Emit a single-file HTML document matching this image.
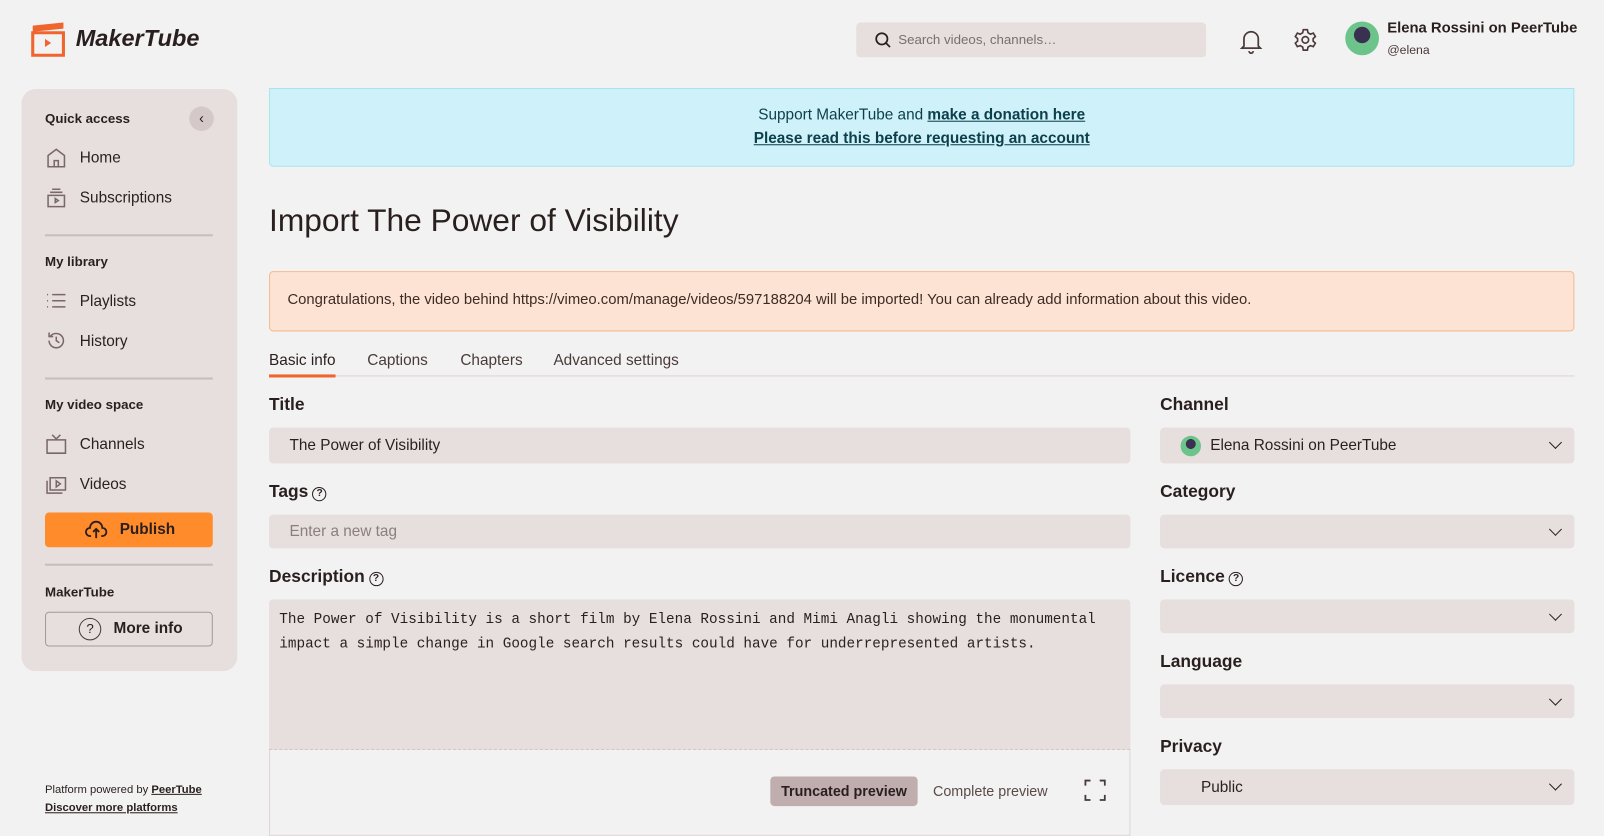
<!DOCTYPE html><html><head><style>
*{box-sizing:border-box;margin:0;padding:0}
html,body{width:1604px;height:817px;overflow:hidden;background:#f3f2f2}
#w{position:absolute;left:0;top:0;width:1568px;height:799px;transform:scale(1.023);transform-origin:0 0;font-family:"Liberation Sans",sans-serif;color:#2a1f1f;font-size:15px}
.a{position:absolute}
.side{left:21px;top:87px;width:211px;height:569px;background:#e7dede;border-radius:14px}
.sh{font-size:13px;font-weight:bold;left:44px}
.si{left:44px;font-size:15px;display:flex;align-items:center;gap:12px}
.si svg{width:22px;height:22px;fill:none;stroke:#7a6868;stroke-width:1.5}
.hr{left:44px;width:164px;height:2px;background:#c9bcbc}
.inp{background:#e7dede;border-radius:4px;height:35px;padding:0 20px;display:flex;align-items:center}
.lab{font-size:17px;font-weight:bold}
.q{display:inline-block;width:14px;height:14px;border:1.5px solid #2a1f1f;border-radius:50%;font-size:10px;text-align:center;line-height:11px;vertical-align:1px;margin-left:4px}
.chev{position:absolute;right:14px;top:10px;width:9px;height:9px;border-right:1.7px solid #2a1f1f;border-bottom:1.7px solid #2a1f1f;transform:rotate(45deg)}
</style></head><body><div id="w">
<svg class="a" style="left:30px;top:22px" width="34" height="34" viewBox="0 0 34 34"><path d="M2 10h30v22H2z" fill="none" stroke="#f0642d" stroke-width="3"/><path d="M2 3l30-3v6L2 9z" fill="#f0642d"/><path d="M14 16l6 4-6 4z" fill="#f0642d"/></svg>
<div class="a" style="left:74px;top:24px;font-size:23px;font-weight:bold;font-style:italic">MakerTube</div>
<div class="a" style="left:837px;top:22px;width:342px;height:34px;background:#e7dede;border-radius:4px;color:#7a6e6e;font-size:13px;padding:9px 0 0 41px">Search videos, channels…
<svg class="a" style="left:18px;top:9px" width="16" height="16"><circle cx="7" cy="7" r="5.5" fill="none" stroke="#2a1f1f" stroke-width="1.7"/><path d="M11 11l4 4" stroke="#2a1f1f" stroke-width="1.7"/></svg></div>
<svg class="a" style="left:1211px;top:27px" width="24" height="26" fill="none" stroke="#4a3a3a" stroke-width="1.7"><path d="M5 18V11a7 7 0 0114 0v7l2 2H3z"/><path d="M10 23a2 2 0 004 0"/></svg>
<svg class="a" style="left:1264px;top:27px" width="24" height="24" fill="none" stroke="#4a3a3a" stroke-width="1.6"><circle cx="12" cy="12" r="3.2"/><path d="M10 2h4l.6 3 2.4 1.4 2.8-1 2 3.4-2.2 2v2.4l2.2 2-2 3.4-2.8-1-2.4 1.4-.6 3h-4l-.6-3-2.4-1.4-2.8 1-2-3.4 2.2-2v-2.4l-2.2-2 2-3.4 2.8 1L9.4 5z"/></svg>
<div class="a" style="left:1315px;top:21px;width:33px;height:33px;border-radius:50%;background:radial-gradient(circle at 50% 40%,#3a3050 30%,#6cc48a 32%)"></div>
<div class="a" style="left:1356px;top:20px;font-size:14.5px;font-weight:bold">Elena Rossini on PeerTube</div>
<div class="a" style="left:1356px;top:42px;font-size:12px;color:#4a3a3a">@elena</div>

<div class="a side"></div>
<div class="a sh" style="top:108px">Quick access</div>
<div class="a" style="left:185px;top:104px;width:24px;height:24px;border-radius:50%;background:#d5c8c8;font-size:14px;text-align:center;line-height:23px">‹</div>
<div class="a si" style="top:143px"><svg viewBox="0 0 22 22"><path d="M3 20V9l8-6 8 6v11zM9 20v-6h4v6"/></svg>Home</div>
<div class="a si" style="top:182px"><svg viewBox="0 0 22 22"><path d="M3 9h16v11H3zM5 6h12M7 3h8M10 12l3 2-3 2z"/></svg>Subscriptions</div>
<div class="a hr" style="top:229px"></div>
<div class="a sh" style="top:248px">My library</div>
<div class="a si" style="top:283px"><svg viewBox="0 0 22 22"><path d="M2 5h1M7 5h13M2 11h1M7 11h13M2 17h1M7 17h13"/></svg>Playlists</div>
<div class="a si" style="top:322px"><svg viewBox="0 0 22 22"><path d="M4 11a7 7 0 107-7 7 7 0 00-6 3M4 3v4h4M11 7v4l3 2"/></svg>History</div>
<div class="a hr" style="top:369px"></div>
<div class="a sh" style="top:388px">My video space</div>
<div class="a si" style="top:423px"><svg viewBox="0 0 22 22"><path d="M2 7h18v13H2zM7 2l4 4 4-4"/></svg>Channels</div>
<div class="a si" style="top:462px"><svg viewBox="0 0 22 22"><path d="M5 5h15v12H5zM2 8v12h15M11 8l4 3-4 3z"/></svg>Videos</div>
<div class="a" style="left:44px;top:501px;width:164px;height:34px;background:#ff8b2b;border-radius:4px;font-weight:bold;line-height:34px;padding-left:73px">Publish
<svg class="a" style="left:39px;top:7px" width="22" height="20" fill="none" stroke="#2a1f1f" stroke-width="1.8"><path d="M6 16H5a4 4 0 010-8 6 6 0 0112 0 4 4 0 010 8h-1M11 18V9M8 12l3-3 3 3"/></svg></div>
<div class="a hr" style="top:551px"></div>
<div class="a sh" style="top:571px">MakerTube</div>
<div class="a" style="left:44px;top:598px;width:164px;height:34px;border:1px solid #a89898;border-radius:4px;font-weight:bold;line-height:32px;padding-left:66px">More info
<span class="a" style="left:32px;top:5px;width:22px;height:22px;border:1.5px solid #4a3a3a;border-radius:50%;font-size:13px;line-height:19px;font-weight:normal;text-align:center">?</span></div>
<div class="a" style="left:44px;top:766px;font-size:11px">Platform powered by <b><u>PeerTube</u></b></div>
<div class="a" style="left:44px;top:784px;font-size:11px;font-weight:bold;text-decoration:underline">Discover more platforms</div>

<div class="a" style="left:263px;top:86px;width:1276px;height:77px;background:#cff1f9;border:1px solid #a8e3f0;border-radius:0 0 4px 4px;text-align:center;color:#0c3f4c;padding-top:14px;line-height:23px">Support MakerTube and <b><u>make a donation here</u></b><br><b><u>Please read this before requesting an account</u></b></div>
<div class="a" style="left:263px;top:198px;font-size:31px">Import The Power of Visibility</div>
<div class="a" style="left:263px;top:265px;width:1276px;height:59px;background:#fde3d4;border:1px solid #f6b98e;border-radius:4px;padding:19px 17px;font-size:14.5px;color:#3d2b24">Congratulations, the video behind https://vimeo.com/manage/videos/597188204 will be imported! You can already add information about this video.</div>
<div class="a" style="left:263px;top:367px;width:1276px;height:1px;background:#ddd2d2"></div>
<div class="a" style="left:263px;top:344px;font-size:15px">Basic info</div>
<div class="a" style="left:263px;top:366px;width:65px;height:3px;background:#f0642d"></div>
<div class="a" style="left:359px;top:344px;color:#4a3a3a">Captions</div>
<div class="a" style="left:450px;top:344px;color:#4a3a3a">Chapters</div>
<div class="a" style="left:541px;top:344px;color:#4a3a3a">Advanced settings</div>

<div class="a lab" style="left:263px;top:386px">Title</div>
<div class="a inp" style="left:263px;top:418px;width:842px">The Power of Visibility</div>
<div class="a lab" style="left:263px;top:471px">Tags<span class="q">?</span></div>
<div class="a inp" style="left:263px;top:503px;width:842px;height:33px;color:#8a7e7e">Enter a new tag</div>
<div class="a lab" style="left:263px;top:554px">Description<span class="q">?</span></div>
<div class="a" style="left:263px;top:586px;width:842px;height:147px;background:#e7dede;border-radius:4px 4px 0 0;border-bottom:1px dashed #c9bcbc;padding:8px 10px;font-family:'Liberation Mono',monospace;font-size:14px;line-height:24px">The Power of Visibility is a short film by Elena Rossini and Mimi Anagli showing the monumental impact a simple change in Google search results could have for underrepresented artists.</div>
<div class="a" style="left:263px;top:733px;width:842px;height:84px;border:1px solid #e0d6d6;border-top:none"></div>
<div class="a" style="left:753px;top:759px;width:144px;height:29px;background:#c0aeae;border-radius:4px;font-size:14px;font-weight:bold;text-align:center;line-height:29px">Truncated preview</div>
<div class="a" style="left:912px;top:765px;font-size:14px;color:#5a4a4a">Complete preview</div>
<svg class="a" style="left:1060px;top:762px" width="21" height="21" fill="none" stroke="#4a3a3a" stroke-width="1.8"><path d="M1 6V1h5M15 1h5v5M20 15v5h-5M6 20H1v-5"/></svg>

<div class="a lab" style="left:1134px;top:386px">Channel</div>
<div class="a inp" style="left:1134px;top:418px;width:405px;padding-left:20px"><span style="width:20px;height:20px;border-radius:50%;background:radial-gradient(circle at 50% 40%,#3a3050 30%,#6cc48a 32%);margin-right:9px"></span>Elena Rossini on PeerTube<span class="chev"></span></div>
<div class="a lab" style="left:1134px;top:471px">Category</div>
<div class="a inp" style="left:1134px;top:503px;width:405px;height:33px"><span class="chev"></span></div>
<div class="a lab" style="left:1134px;top:554px">Licence<span class="q">?</span></div>
<div class="a inp" style="left:1134px;top:586px;width:405px;height:33px"><span class="chev"></span></div>
<div class="a lab" style="left:1134px;top:637px">Language</div>
<div class="a inp" style="left:1134px;top:669px;width:405px;height:33px"><span class="chev"></span></div>
<div class="a lab" style="left:1134px;top:720px">Privacy</div>
<div class="a inp" style="left:1134px;top:752px;width:405px;height:35px;padding-left:40px">Public<span class="chev"></span></div>
</div></body></html>
